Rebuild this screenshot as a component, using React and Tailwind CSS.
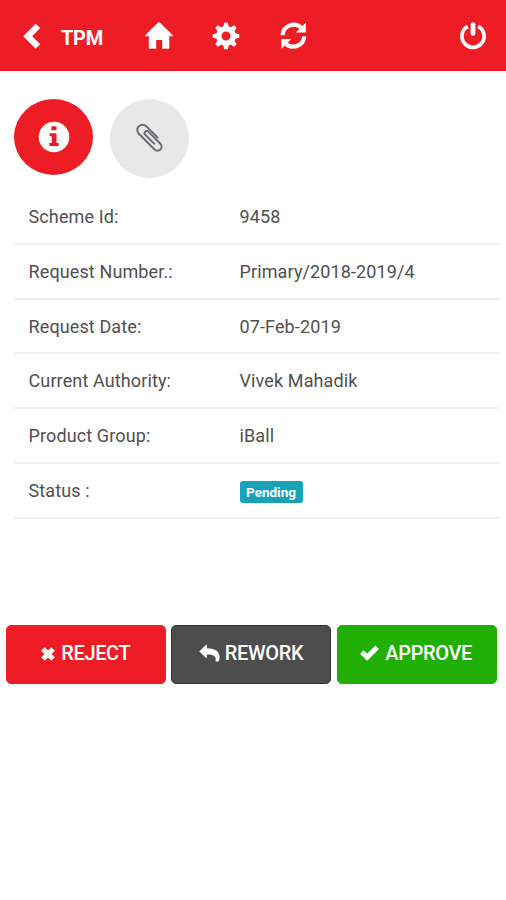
const rows = [
  ["Scheme Id:", "9458"],
  ["Request Number.:", "Primary/2018-2019/4"],
  ["Request Date:", "07-Feb-2019"],
  ["Current Authority:", "Vivek Mahadik"],
  ["Product Group:", "iBall"],
  ["Status :", null],
];

function ChevronLeft() {
  return (
    <svg className="ml-[23px] w-[18px] h-7" viewBox="0 0 18 28" fill="currentColor">
      <path d="M12.6 1.7 17.2 6 9.2 14.2 17.2 22.3 12.6 26.7 .3 14.2Z" />
    </svg>
  );
}

function Home() {
  return (
    <svg className="ml-[41px] w-[30px] h-7" viewBox="0 0 30 28" fill="currentColor">
      <path d="M15 .2Q15.6.2 16.2.8L29 13.4Q29.6 14.3 28.6 14.3H25.3V25.7Q25.3 26.8 24.2 26.8H18.2V18H12.2V26.8H6Q4.8 26.8 4.8 25.7V14.3H1.4Q.4 14.3 1 13.4L13.8.8Q14.4.2 15 .2Z" />
    </svg>
  );
}

function Cog() {
  return (
    <svg className="ml-[37.5px] w-7 h-7" viewBox="-14 -14 28 28" fill="currentColor">
      <path
        fillRule="evenodd"
        d="M-9.9 0a9.9 9.9 0 1 0 19.8 0a9.9 9.9 0 1 0-19.8 0M-4.5 0a4.5 4.5 0 1 1 9 0a4.5 4.5 0 1 1-9 0"
      />
      {[0, 45, 90, 135, 180, 225, 270, 315].map((a) => (
        <path key={a} transform={`rotate(${a})`} d="M-2.8-8.8-1.8-13.3H1.8L2.8-8.8Z" />
      ))}
    </svg>
  );
}

function Refresh() {
  return (
    <svg className="ml-[40px] w-7 h-7" viewBox="0 0 28 28" fill="none">
      <path d="M2.6 13.2A11 10.6 0 0 1 21.2 5.8M24.2 14.4A11 10.6 0 0 1 5.8 21.8" stroke="currentColor" strokeWidth="4.2" />
      <path d="M25.8.8V10.6H15.8ZM1.4 26.8V17H11.4Z" fill="currentColor" />
    </svg>
  );
}

function Power() {
  return (
    <svg className="ml-auto mr-[19.4px] w-7 h-7" viewBox="0 0 28 28" fill="none" stroke="currentColor">
      <path d="M8.8 4.4A11.1 11.1 0 1 0 19.2 4.4" strokeWidth="3.7" />
      <path d="M14 2.6V11.4" strokeWidth="4.8" strokeLinecap="round" />
    </svg>
  );
}

function Info() {
  return (
    <svg className="w-8 h-8" viewBox="0 0 32 32">
      <circle cx="16" cy="16" r="15.3" fill="white" />
      <path d="M13.5 5.3H18.5V9.3H13.5ZM11.5 12.2H18.5V22H20.7V25H11.3V22H13.8V15.2H11.5Z" fill="#ee1c25" />
    </svg>
  );
}

function Paperclip() {
  return (
    <svg className="w-8 h-8" viewBox="0 0 32 32" fill="none" stroke="#6b6e71" strokeWidth="2">
      <path
        transform="translate(15.6 15.3) rotate(-45)"
        d="M6.2 6V-10.8A5.3 5.3 0 0 0-4.4-10.8V11.4A4.1 4.1 0 0 0 3.8 11.4V-5.6A2.2 2.2 0 0 0-.6-5.6V8"
      />
    </svg>
  );
}

function Remove() {
  return (
    <svg className="w-[14px] h-[14px] mr-[6px] mt-px" viewBox="0 0 14 14" stroke="currentColor" strokeWidth="5">
      <path d="M1.9 1.9 12.1 12.1M12.1 1.9 1.9 12.1" />
    </svg>
  );
}

function Reply() {
  return (
    <svg className="w-[21px] h-[18px] mr-[5px] -mt-px" viewBox="0 0 21 18" fill="currentColor">
      <path d="M7.8.2V4.2C16.5 4.1 20.8 7.8 20.6 13.4Q20.5 16 19.3 17.6H16.5C17.4 12.8 15.4 10.3 7.8 10.5V14.4L.2 7.4Z" />
    </svg>
  );
}

function Check() {
  return (
    <svg className="w-[19px] h-4 mr-[6px]" viewBox="0 0 19 16" fill="none" stroke="currentColor" strokeWidth="5">
      <path d="M1.8 7.2 7.2 12.2 17.2 2.3" />
    </svg>
  );
}

const button =
  "flex h-[59px] w-[160px] items-center justify-center rounded-[5px] border pb-[2px] pr-[1px] text-[20px] font-medium tracking-[-0.35px] text-white whitespace-nowrap";

export default function App() {
  return (
    <div className="h-[900px] w-[506px] overflow-hidden bg-white font-['Roboto',sans-serif] text-[#505050]">
      <header className="flex h-[71px] items-center border-b border-[#d9141c] bg-[#ee1c25] pt-[2px] text-white">
        <ChevronLeft />
        <h1 className="ml-[20px] mt-[3px] w-[42px] text-[20px] font-bold leading-none tracking-[-0.3px]">TPM</h1>
        <Home />
        <Cog />
        <Refresh />
        <Power />
      </header>

      <nav className="flex gap-[17px] pl-[14px] pt-[28px]">
        <button className="flex h-[76px] w-[79px] items-center justify-center rounded-[50%] bg-[#ee1c25]">
          <Info />
        </button>
        <button className="flex h-[79px] w-[79px] items-center justify-center rounded-full bg-[#e8e8e8]">
          <Paperclip />
        </button>
      </nav>

      <dl className="ml-[14px] mt-[12px] w-[486px] text-[18px] leading-[22px] tracking-[0.12px]">
        {rows.map(([label, value]) => (
          <div key={label} className="flex h-[54.8px] items-center border-b-2 border-[#f1f1f1] pt-[1.2px]">
            <dt className="w-[225.5px] pl-[14.5px]">{label}</dt>
            <dd>
              {value ?? (
                <span className="mt-[2px] flex h-[22px] w-[63px] items-center justify-center rounded-[3px] bg-[#17a2b8] text-[13.5px] font-bold tracking-normal text-white">
                  Pending
                </span>
              )}
            </dd>
          </div>
        ))}
      </dl>

      <div className="mt-[106px] flex gap-[5.2px] pl-[6.3px]">
        <button className={`${button} border-[#ee1c25] bg-[#ee1c25]`}>
          <Remove />
          REJECT
        </button>
        <button className={`${button} border-[#343434] bg-[#4d4d4d]`}>
          <Reply />
          REWORK
        </button>
        <button className={`${button} border-[#21af05] bg-[#21af05]`}>
          <Check />
          APPROVE
        </button>
      </div>
    </div>
  );
}
